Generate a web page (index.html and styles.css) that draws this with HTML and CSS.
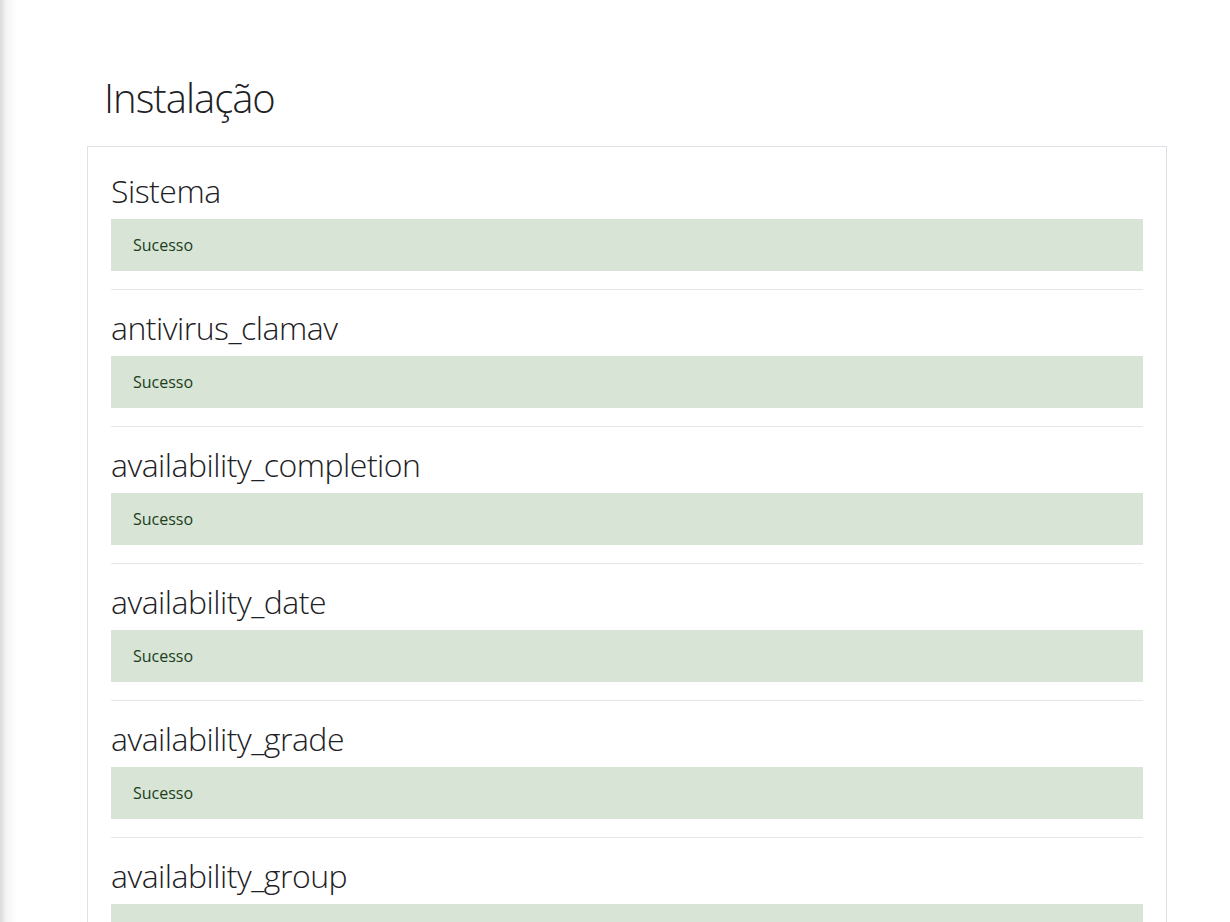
FILE: index.html
```html
<!DOCTYPE html>
<html lang="pt">
<head>
<meta charset="utf-8">
<title>Instalação</title>
<link rel="stylesheet" href="styles.css">
</head>
<body>
<div class="page">
  <h2 class="page-title">Instalação</h2>
  <div class="box">
    <div class="row">
      <h3 class="row-title">Sistema</h3>
      <div class="alert">Sucesso</div>
    </div>
    <hr class="sep">
    <div class="row">
      <h3 class="row-title">antivirus_clamav</h3>
      <div class="alert">Sucesso</div>
    </div>
    <hr class="sep">
    <div class="row">
      <h3 class="row-title">availability_completion</h3>
      <div class="alert">Sucesso</div>
    </div>
    <hr class="sep">
    <div class="row">
      <h3 class="row-title">availability_date</h3>
      <div class="alert">Sucesso</div>
    </div>
    <hr class="sep">
    <div class="row">
      <h3 class="row-title">availability_grade</h3>
      <div class="alert">Sucesso</div>
    </div>
    <hr class="sep">
    <div class="row">
      <h3 class="row-title">availability_group</h3>
      <div class="alert">Sucesso</div>
    </div>
    <hr class="sep">
    <div class="row">
      <h3 class="row-title">availability_grouping</h3>
      <div class="alert">Sucesso</div>
    </div>
  </div>
</div>
</body>
</html>
```

FILE: styles.css
```css
html, body {
  margin: 0;
  padding: 0;
  height: 100%;
  overflow: hidden;
}
body {
  background: #fff linear-gradient(to right, #d9d9d9 0px, #f3f3f3 6px, #fdfdfd 14px, #fff 18px) no-repeat;
  background-size: 18px 100%;
  font-family: "Open Sans", "Segoe UI", sans-serif;
  color: #1d2125;
}
.page {
  padding: 74px 0 0 87px;
  width: 1080px;
}
.page-title {
  margin: 0 0 24px 17px;
  font-size: 40px;
  line-height: 48px;
  font-weight: 300;
  letter-spacing: -1px;
}
.box {
  border: 1px solid #dee2e6;
  padding: 24px 23px 40px 23px;
}
.row-title {
  margin: 0 0 9px 0;
  padding-top: 1px;
  font-size: 32px;
  line-height: 38px;
  font-weight: 300;
  letter-spacing: -0.5px;
}
.alert {
  background: #d7e4d6;
  border: 1px solid #d7e4d6;
  color: #1c3f1a;
  padding: 13px 21px;
  font-size: 16px;
  line-height: 24px;
  margin: 0 0 18px 0;
}
.sep {
  border: 0;
  border-top: 1px solid #e6e6e6;
  margin: 0 0 18px 0;
  height: 0;
}
```
